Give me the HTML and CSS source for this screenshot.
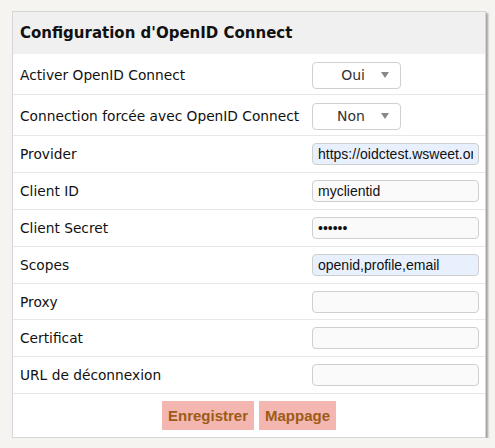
FILE: index.html
```html
<!DOCTYPE html>
<html lang="fr">
<head>
<meta charset="utf-8">
<title>Configuration d'OpenID Connect</title>
<link rel="stylesheet" href="styles.css">
</head>
<body>
<div class="card">
  <div class="card-header">Configuration d'OpenID Connect</div>
  <table class="form">
    <tr class="row row-select">
      <td class="label">Activer OpenID Connect</td>
      <td class="control"><div class="select"><span class="select-text">Oui</span><span class="arrow"></span></div></td>
    </tr>
    <tr class="row row-select">
      <td class="label">Connection forcée avec OpenID Connect</td>
      <td class="control"><div class="select"><span class="select-text">Non</span><span class="arrow"></span></div></td>
    </tr>
    <tr class="row">
      <td class="label">Provider</td>
      <td class="control"><input class="input autofill" type="text" value="https://oidctest.wsweet.org/"></td>
    </tr>
    <tr class="row">
      <td class="label">Client ID</td>
      <td class="control"><input class="input" type="text" value="myclientid"></td>
    </tr>
    <tr class="row">
      <td class="label">Client Secret</td>
      <td class="control"><input class="input" type="password" value="secret"></td>
    </tr>
    <tr class="row">
      <td class="label">Scopes</td>
      <td class="control"><input class="input autofill" type="text" value="openid,profile,email"></td>
    </tr>
    <tr class="row">
      <td class="label">Proxy</td>
      <td class="control"><input class="input" type="text" value=""></td>
    </tr>
    <tr class="row">
      <td class="label">Certificat</td>
      <td class="control"><input class="input" type="text" value=""></td>
    </tr>
    <tr class="row">
      <td class="label">URL de déconnexion</td>
      <td class="control"><input class="input" type="text" value=""></td>
    </tr>
  </table>
  <div class="actions">
    <button class="btn" type="button">Enregistrer</button>
    <button class="btn" type="button">Mappage</button>
  </div>
</div>
</body>
</html>
```
FILE: styles.css
```css
html, body {
  margin: 0;
  padding: 0;
}
body {
  background: #f5f4f0;
  padding: 11px 0 0 12px;
  font-family: "DejaVu Sans", Verdana, sans-serif;
  color: #111;
}
.card {
  width: 472px;
  background: #fff;
  border: 1px solid #d6d6d6;
  box-shadow: 2px 2px 2px rgba(0, 0, 0, 0.35);
}
.card-header {
  background: #f0f0f0;
  height: 42px;
  line-height: 42px;
  padding-left: 7px;
  font-weight: bold;
  font-size: 15px;
  color: #111;
}
.form {
  width: 100%;
  border-collapse: collapse;
}
.row td {
  border-bottom: 1px solid #e8e8e8;
  vertical-align: middle;
  padding: 7px 0 6.9px;
}
.row-select td {
  padding: 7.5px 0 5.5px;
}
.label {
  font-size: 13.75px;
  padding-left: 7px !important;
  white-space: nowrap;
}
.control {
  width: 173px;
}
.input {
  display: block;
  box-sizing: border-box;
  width: 167px;
  height: 22px;
  margin: 0;
  padding: 0 5px;
  border: 1px solid #cfcfcf;
  border-radius: 4px;
  background: #fafafa;
  font-family: "Liberation Sans", Arial, sans-serif;
  font-size: 14px;
  color: #111;
  outline: none;
}
.input.autofill {
  background: #e8f0fe;
}
.select {
  box-sizing: border-box;
  width: 89px;
  height: 27px;
  border: 1px solid #d0d0d0;
  border-radius: 4px;
  background: #fff;
  display: flex;
  align-items: center;
  justify-content: flex-end;
  padding-right: 11px;
  gap: 16px;
}
.select-text {
  font-size: 14px;
  color: #333;
}
.arrow {
  width: 0;
  height: 0;
  border-left: 4px solid transparent;
  border-right: 4px solid transparent;
  border-top: 6px solid #888;
}
.actions {
  display: flex;
  justify-content: center;
  gap: 5px;
  padding: 7px 0 7px;
}
.btn {
  height: 29px;
  margin: 0;
  padding: 0 6px;
  border: none;
  background: #f4b6b0;
  color: #9c5c16;
  font-family: "Liberation Sans", Arial, sans-serif;
  font-weight: bold;
  font-size: 15px;
}
```
